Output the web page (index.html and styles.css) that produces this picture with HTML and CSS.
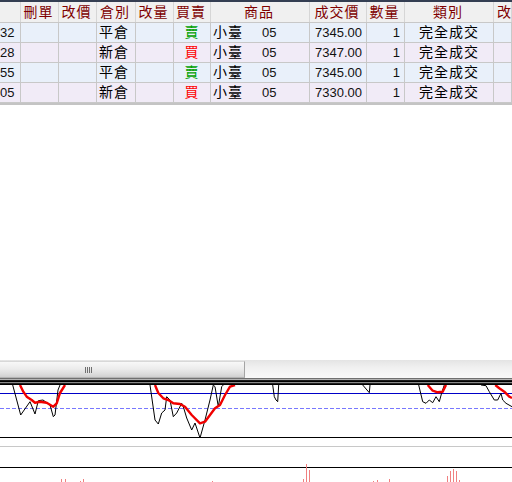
FILE: index.html
```html
<!DOCTYPE html>
<html>
<head>
<meta charset="utf-8">
<link rel="stylesheet" href="styles.css">
</head>
<body>
<div class="table">
  <div class="row head">
    <div class="c"></div>
    <div class="c">刪單</div>
    <div class="c">改價</div>
    <div class="c">倉別</div>
    <div class="c">改量</div>
    <div class="c">買賣</div>
    <div class="c">商品</div>
    <div class="c">成交價</div>
    <div class="c">數量</div>
    <div class="c">類別</div>
    <div class="c lastc">改</div>
  </div>
  <div class="row r1">
    <div class="c num first">32</div><div class="c"></div><div class="c"></div>
    <div class="c txt">平倉</div><div class="c"></div>
    <div class="c ctr sell">賣</div>
    <div class="c txt"><span class="name">小臺</span><span class="num">05</span></div>
    <div class="c num right">7345.00</div>
    <div class="c num right">1</div>
    <div class="c ctr">完全成交</div><div class="c"></div>
  </div>
  <div class="row r2">
    <div class="c num first">28</div><div class="c"></div><div class="c"></div>
    <div class="c txt">新倉</div><div class="c"></div>
    <div class="c ctr buy">買</div>
    <div class="c txt"><span class="name">小臺</span><span class="num">05</span></div>
    <div class="c num right">7347.00</div>
    <div class="c num right">1</div>
    <div class="c ctr">完全成交</div><div class="c"></div>
  </div>
  <div class="row r1">
    <div class="c num first">55</div><div class="c"></div><div class="c"></div>
    <div class="c txt">平倉</div><div class="c"></div>
    <div class="c ctr sell">賣</div>
    <div class="c txt"><span class="name">小臺</span><span class="num">05</span></div>
    <div class="c num right">7345.00</div>
    <div class="c num right">1</div>
    <div class="c ctr">完全成交</div><div class="c"></div>
  </div>
  <div class="row r2">
    <div class="c num first">05</div><div class="c"></div><div class="c"></div>
    <div class="c txt">新倉</div><div class="c"></div>
    <div class="c ctr buy">買</div>
    <div class="c txt"><span class="name">小臺</span><span class="num">05</span></div>
    <div class="c num right">7330.00</div>
    <div class="c num right">1</div>
    <div class="c ctr">完全成交</div><div class="c"></div>
  </div>
</div>
<div class="blank"></div>
<div class="hscroll">
  <div class="thumb"><div class="grip"></div></div>
</div>
<div class="band"></div>
<svg class="chart" width="512" height="97" viewBox="0 0 512 97">
  <line x1="0" y1="8.5" x2="512" y2="8.5" stroke="#0000c8" stroke-width="1"/>
  <line x1="0" y1="23.5" x2="512" y2="23.5" stroke="#7878ff" stroke-width="1" stroke-dasharray="4 2"/>
  <line x1="0" y1="52.5" x2="512" y2="52.5" stroke="#000" stroke-width="1"/>
  <line x1="0" y1="61.5" x2="512" y2="61.5" stroke="#c8c8c8" stroke-width="1"/>
  <line x1="0" y1="82.5" x2="512" y2="82.5" stroke="#000" stroke-width="1"/>
  <g fill="none" stroke="#000" stroke-width="1">
    <polyline points="12.7,0 20.7,30 30,16.7 35,29 38.3,15.7 43,15 50,20 53.3,31.7 55,30 58,5 60,0"/>
    <polyline points="150,0 155,35 158.3,39 161.7,28 165,25 166.7,11.7 170,15 173.3,31.7 176.7,28 181.7,18.3 183.3,21.7 186.7,33 191.7,45 195,38 200,53 205,35 210,15 213.3,0 215,1.7 218.3,21.7 221.7,1.7 223.3,0"/>
    <polyline points="272.7,0 274.3,11.7 276,15 277.7,16.7 278.7,0"/>
    <polyline points="362.7,0 369.3,7.7 370,0"/>
    <polyline points="418.7,0 422.7,16.7 426,18.3 429.3,15 432.7,17.7 436,11.7 439.3,16.7 442,6.7 444.3,0"/>
    <polyline points="481,0 486,0.7 489.3,6.7 494.3,15 497.7,15 501,8.3 502.7,15 506,18.3 512,21.7"/>
  </g>
  <g fill="none" stroke="#f00000" stroke-width="2.4" stroke-linejoin="round">
    <polyline points="20,0 23.3,6.7 26.7,11.7 31.7,15 35,17.7 40,16.7 46.7,17.7 53.3,21.7 56.7,18.3 60,8 65,0"/>
    <polyline points="155,0 158.3,8 163.3,13.3 168.3,15 173.3,18.3 180,19 185,21.7 191.7,30 200,38.3 205,36.7 210,30 215,23.3 220,20 225,10 230,1.7 235,0"/>
    <polyline points="427.7,0 432.7,5.7 437.7,7.3 442.7,6.7 446,0"/>
    <polyline points="495.3,0 499.3,3.3 504.3,6.7 509.3,11.7 512,13"/>
  </g>
  <g stroke="#f08080" stroke-width="1">
    <line x1="61.5" y1="94" x2="61.5" y2="97"/>
    <line x1="65.5" y1="94" x2="65.5" y2="97"/>
    <line x1="80.5" y1="96" x2="80.5" y2="97"/>
    <line x1="83.5" y1="94" x2="83.5" y2="97"/>
    <line x1="212.5" y1="96" x2="212.5" y2="97"/>
    <line x1="303.5" y1="94" x2="303.5" y2="97"/>
    <line x1="306.5" y1="79" x2="306.5" y2="97"/>
    <line x1="309.5" y1="85" x2="309.5" y2="97"/>
    <line x1="373.5" y1="96" x2="373.5" y2="97"/>
    <line x1="377.5" y1="95" x2="377.5" y2="97"/>
    <line x1="389.5" y1="94" x2="389.5" y2="97"/>
    <line x1="447.5" y1="91" x2="447.5" y2="97"/>
    <line x1="450.5" y1="86" x2="450.5" y2="97"/>
    <line x1="453.5" y1="84" x2="453.5" y2="97"/>
    <line x1="456.5" y1="86" x2="456.5" y2="97"/>
    <line x1="459.5" y1="95" x2="459.5" y2="97"/>
  </g>
</svg>
</body>
</html>
```
FILE: styles.css
```css
* { box-sizing: border-box; }
body {
  margin: 0;
  width: 512px;
  height: 482px;
  overflow: hidden;
  background: #ffffff;
  font-family: "Liberation Sans", "Noto Sans CJK TC", sans-serif;
}
.table {
  border-top: 2px solid #343e52;
  border-bottom: 2px solid #c4c4c4;
}
.row {
  display: grid;
  grid-template-columns: 21px 38px 38px 39px 38px 37px 99px 57px 38px 89px 18px;
  height: 20px;
  border-bottom: 1px solid #c8c8c8;
}
.row.head {
  height: 21px;
  background: #f0f0f0;
}
.c {
  border-right: 1px solid #c8c8c8;
  overflow: hidden;
  white-space: nowrap;
  font-size: 14px;
  line-height: 19px;
  letter-spacing: 1px;
  color: #000;
}
.head .c {
  border-right-color: #d6d6d6;
  color: #800000;
  text-align: center;
  line-height: 20px;
  padding-right: 2px;
}
.head .lastc {
  text-align: left;
  padding-left: 3px;
  padding-right: 0;
  letter-spacing: 0;
}
.r1 { background: #e9f0fa; }
.r2 { background: #f1ebf7; }
.txt { padding-left: 2px; }
.ctr { text-align: center; }
.num {
  font-size: 13px;
  letter-spacing: 0;
  color: #111;
}
.first { padding-left: 0; }
.right {
  text-align: right;
  padding-right: 4px;
}
.name {
  display: inline-block;
  width: 49px;
}
.sell { color: #00a000; }
.buy { color: #ff0000; }
.blank { height: 255px; }
.hscroll {
  height: 18px;
  background: linear-gradient(#e4e4e4, #f0f0f0 40%, #f8f8f8);
  padding-top: 1px;
}
.thumb {
  width: 245px;
  height: 17px;
  background: linear-gradient(#f8f8f8, #ececec 45%, #dcdcdc 80%, #d0d0d0);
  border-top: 1px solid #d8d8d8;
  border-right: 1px solid #a4a4a4;
  border-bottom: 1px solid #b4b4b4;
  padding-left: 85px;
  padding-top: 5px;
}
.grip {
  width: 7px;
  height: 6px;
  background: repeating-linear-gradient(90deg, #707070 0 1px, transparent 1px 2px);
}
.band {
  height: 7px;
  background: linear-gradient(#707070 0 1px, #b4b4b4 1px 2px, #1a1a1a 2px 3px, #000 3px 4px, #8a8a8a 4px 5px, #202020 5px 6px, #000 6px 7px);
}
.chart { display: block; }
```
